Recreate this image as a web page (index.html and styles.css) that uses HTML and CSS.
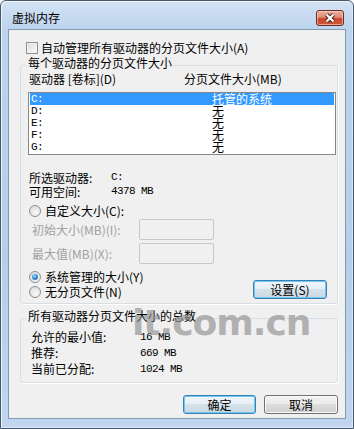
FILE: index.html
```html
<!DOCTYPE html>
<html lang="zh-CN">
<head>
  <meta charset="UTF-8" />
  <title>虚拟内存</title>
  <link rel="stylesheet" href="styles.css">
</head>
<body>
  <div class="window">
    <div class="titlebar">
      <span class="title">虚拟内存</span>
      <button class="close-btn" aria-label="关闭">
        <svg width="26" height="14" viewBox="0 0 26 14">
          <path d="M9.5 3.5 L16.5 10.5 M16.5 3.5 L9.5 10.5" stroke="#4a2418" stroke-width="4.2" fill="none"/>
          <path d="M9.5 3.5 L16.5 10.5 M16.5 3.5 L9.5 10.5" stroke="#fff" stroke-width="2.2" fill="none"/>
        </svg>
      </button>
    </div>

    <div class="client">
      <label class="check-row"><span class="checkbox"></span>自动管理所有驱动器的分页文件大小(A)</label>

      <fieldset class="group group-drives">
        <legend>每个驱动器的分页文件大小</legend>
        <div class="list-head"><span>驱动器 [卷标](D)</span><span>分页文件大小(MB)</span></div>
        <div class="listbox">
          <div class="list-row selected"><span class="mono">C:</span><span>托管的系统</span></div>
          <div class="list-row"><span class="mono">D:</span><span>无</span></div>
          <div class="list-row"><span class="mono">E:</span><span>无</span></div>
          <div class="list-row"><span class="mono">F:</span><span>无</span></div>
          <div class="list-row"><span class="mono">G:</span><span>无</span></div>
        </div>

        <div class="info">
          <span>所选驱动器:</span><span class="mono">C:</span>
          <span>可用空间:</span><span class="mono">4378 MB</span>
        </div>

        <label class="radio-row custom"><span class="radio"></span>自定义大小(C):</label>
        <div class="size-row first"><span class="disabled">初始大小(MB)(I):</span><span class="textbox"></span></div>
        <div class="size-row"><span class="disabled">最大值(MB)(X):</span><span class="textbox"></span></div>

        <div class="mode-row">
          <div class="mode-options">
            <label class="radio-row"><span class="radio checked"></span>系统管理的大小(Y)</label>
            <label class="radio-row"><span class="radio"></span>无分页文件(N)</label>
          </div>
          <button class="btn btn-default set-btn">设置(S)</button>
        </div>
      </fieldset>

      <fieldset class="group group-total">
        <legend>所有驱动器分页文件大小的总数</legend>
        <div class="totals">
          <span>允许的最小值:</span><span class="mono">16 MB</span>
          <span>推荐:</span><span class="mono">669 MB</span>
          <span>当前已分配:</span><span class="mono">1024 MB</span>
        </div>
      </fieldset>

      <div class="actions">
        <button class="btn btn-default">确定</button>
        <button class="btn">取消</button>
      </div>
    </div>

    <div class="watermark">it.com.cn</div>
  </div>
</body>
</html>
```

FILE: styles.css
```css
* {
  box-sizing: border-box;
}

body {
  margin: 0;
  background: #fff;
  font-family: "Noto Sans CJK SC", "Noto Sans", sans-serif;
  font-size: 12px;
  line-height: 12px;
  color: #000;
}

.window {
  position: relative;
  width: 354px;
  height: 429px;
  border: 1px solid #46586c;
  border-radius: 6px 6px 0 0;
  padding: 0 7px 9px;
  display: flex;
  flex-direction: column;
  background: linear-gradient(#d3e3f4 0, #bdd4ed 28px, #b6cee9 60%, #c0d6ee 100%);
  box-shadow: inset 1px 1px 0 rgba(255, 255, 255, 0.7), inset -1px -1px 0 rgba(255, 255, 255, 0.45);
  overflow: hidden;
}

/* title bar */
.titlebar {
  height: 28px;
  flex: none;
  display: flex;
  justify-content: space-between;
  align-items: flex-start;
}

.title {
  margin: 11px 0 0 4px;
}

.close-btn {
  margin: 9px 2px 0 0;
  width: 28px;
  height: 16px;
  padding: 0;
  border: 1px solid #6b2e22;
  border-radius: 3px;
  background: linear-gradient(#eab2a6 0%, #e08a76 45%, #c9452b 55%, #d0593d 100%);
  box-shadow: inset 0 0 0 1px rgba(255, 220, 210, 0.55);
  display: flex;
  align-items: center;
  justify-content: center;
}

/* client area */
.client {
  flex: 1;
  background: #f0f0f0;
  border: 1px solid #8199b3;
  display: flex;
  flex-direction: column;
}

.check-row {
  display: flex;
  align-items: center;
  gap: 3px;
  height: 12px;
  margin: 12px 0 0 17px;
}

.checkbox {
  width: 12px;
  height: 12px;
  border: 1px solid #8f8f8f;
  background: linear-gradient(135deg, #dcdcdc, #fbfbfb);
  box-shadow: inset 0 0 0 1px #f4f4f4;
}

/* group boxes */
.group {
  margin: 3px 7px 0 11px;
  padding: 0 1px 5px 7px;
  border: 1px solid #d5dfe5;
  border-radius: 3px;
  min-width: 0;
  box-shadow: 1px 1px 0 #fff;
}

.group legend {
  margin-left: -1px;
  padding: 0 1px 4px;
  line-height: 12px;
}

.list-head {
  display: grid;
  grid-template-columns: 155px 1fr;
  padding-left: 1px;
}

.listbox {
  margin-top: 7px;
  height: 63px;
  border: 1px solid #828790;
  background: #fff;
  padding: 0 1px;
}

.list-row {
  display: grid;
  grid-template-columns: 181px 1fr;
  padding-left: 1px;
  height: 12px;
  line-height: 12px;
}

.list-row.selected {
  background: #3399ff;
  color: #fff;
}

.mono {
  font-family: "Liberation Mono", monospace;
  font-size: 11px;
  letter-spacing: -0.6px;
}

.info {
  display: grid;
  grid-template-columns: 82px 1fr;
  line-height: 14px;
  margin-top: 16px;
  padding-left: 1px;
}

.info .mono {
  line-height: 12px;
}

.radio-row {
  display: flex;
  align-items: center;
  gap: 4px;
  height: 12px;
  padding-left: 1px;
}

.radio-row.custom {
  margin-top: 6px;
}

.radio {
  width: 12px;
  height: 12px;
  border: 1px solid #8e8f8f;
  border-radius: 50%;
  background: radial-gradient(circle at 60% 65%, #f9f9f9 0, #e4e4e4 60%, #d2d2d2 100%);
  position: relative;
}

.radio.checked::after {
  content: "";
  position: absolute;
  left: 2px;
  top: 2px;
  width: 6px;
  height: 6px;
  border-radius: 50%;
  background: radial-gradient(circle at 40% 35%, #9fdcff 0, #3e91d6 45%, #1c4f8c 100%);
}

.size-row {
  display: grid;
  grid-template-columns: 107px 75px;
  align-items: center;
  padding-left: 4px;
  margin-top: 3px;
}

.size-row.first {
  margin-top: 2px;
}

.disabled {
  color: #a0a0a0;
}

.textbox {
  height: 21px;
  border: 1px solid #c8c8c8;
  border-radius: 2px;
  background: #f0f0f0;
}

.mode-row {
  display: flex;
  justify-content: space-between;
  margin-top: 7px;
}

.mode-options {
  display: flex;
  flex-direction: column;
  gap: 3px;
}

.set-btn {
  align-self: flex-end;
  margin: 0 9px -1px 0;
  width: 72px;
  height: 18px;
}

.group-total {
  margin-top: 6px;
}

.totals {
  display: grid;
  grid-template-columns: 109px 1fr;
  line-height: 16px;
  margin-top: 3px;
  padding-left: 3px;
}

/* buttons */
.btn {
  height: 19px;
  width: 74px;
  padding: 0;
  font: inherit;
  color: #000;
  border: 1px solid #707070;
  border-radius: 3px;
  background: linear-gradient(#f2f2f2 0%, #ebebeb 50%, #dddddd 50%, #cfcfcf 100%);
  box-shadow: inset 0 0 0 1px #fbfbfb;
}

.btn-default {
  border-color: #3c7fb1;
  background: linear-gradient(#f0f6fa 0%, #e6eef4 50%, #d6e2ea 50%, #cbd9e2 100%);
  box-shadow: inset 0 0 0 1px #6cc9f5;
}

.actions {
  display: flex;
  justify-content: flex-end;
  gap: 8px;
  margin-top: 12px;
  padding-right: 7px;
}

.actions .btn-default {
  width: 73px;
}

.watermark {
  position: absolute;
  left: 131px;
  top: 298px;
  font-family: "DejaVu Sans", sans-serif;
  font-weight: bold;
  font-size: 36px;
  line-height: 48px;
  letter-spacing: -1px;
  color: rgba(140, 140, 140, 0.65);
  pointer-events: none;
}
```
